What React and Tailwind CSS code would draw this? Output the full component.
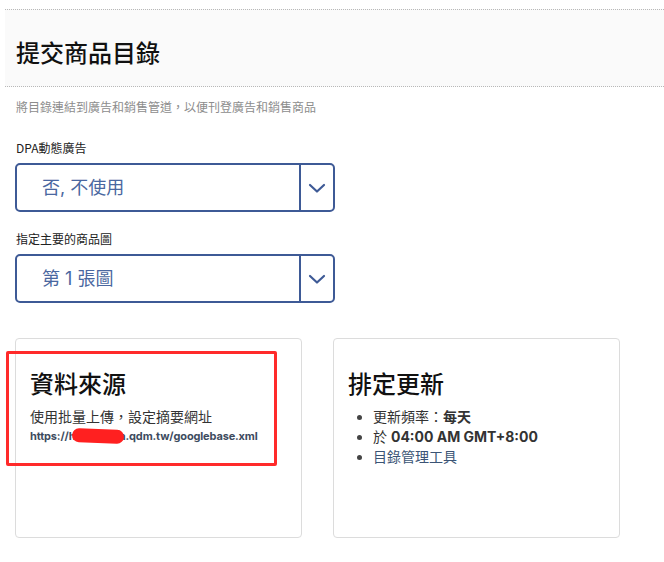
import React from "react";

function Chevron() {
  return (
    <svg width="18" height="12" viewBox="0 0 18 12" fill="none">
      <path d="M2 3 L9 9.5 L16 3" stroke="#3e5a96" strokeWidth="2.2" strokeLinecap="round" strokeLinejoin="round" />
    </svg>
  );
}

function Select({ value }) {
  return (
    <div className="w-[320px] h-[49px] border-2 border-[#3e5a96] rounded-[5px] flex">
      <div className="flex-1 flex items-center pl-[25px] text-[18px] text-[#4a67a0]">{value}</div>
      <div className="w-[34px] border-l-2 border-[#3e5a96] flex items-center justify-center">
        <Chevron />
      </div>
    </div>
  );
}

export default function App() {
  return (
    <div className="w-[664px] h-[562px] bg-white relative overflow-hidden font-['Inter','Noto_Sans_CJK_TC',sans-serif] text-[#1c1e21]">
      <div className="pt-[9px] pl-[5px]">
        <div className="border-y border-dotted border-[#b8b8b8] bg-[#fafafa] h-[78px] pl-[11px] pt-[26px]">
          <h1 className="text-[24px] leading-[32px] font-medium font-['Noto_Sans_CJK_TC',sans-serif] text-[#111]">提交商品目錄</h1>
        </div>
      </div>
      <div className="pl-[16px]">
        <p className="mt-[12px] text-[12px] leading-[16px] text-[#8d8d8d] font-['Noto_Sans_CJK_TC',sans-serif]">將目錄連結到廣告和銷售管道，以便刊登廣告和銷售商品</p>
        <p className="mt-[25px] text-[12px] leading-[16px] text-[#222] font-['Noto_Sans_CJK_TC',sans-serif]">DPA動態廣告</p>
      </div>
      <div className="pl-[15px] mt-[7px]">
        <Select value="否, 不使用" />
      </div>
      <div className="pl-[16px]">
        <p className="mt-[19px] text-[12px] leading-[16px] text-[#222] font-['Noto_Sans_CJK_TC',sans-serif]">指定主要的商品圖</p>
      </div>
      <div className="pl-[15px] mt-[7px]">
        <Select value="第 1 張圖" />
      </div>

      <div className="pl-[15px] mt-[35px] flex gap-[31px]">
        <div className="w-[287px] h-[200px] border border-[#dcdcdc] rounded-[4px] pl-[14px] pt-[30px]">
          <h2 className="text-[24px] leading-[32px] font-medium text-[#111]">資料來源</h2>
          <p className="mt-[6px] text-[14px] leading-[20px] text-[#333]">使用批量上傳，設定摘要網址</p>
          <p className="relative mt-[1px] text-[11px] leading-[16px] font-bold tracking-[-0.15px] text-[#3d4b5e] whitespace-nowrap">
            https://h<span className="inline-block w-[44px]"></span>a.qdm.tw/googlebase.xml
            <span className="absolute left-[42px] top-[1px] w-[52px] h-[14px] bg-[#ff2020] rounded-[7px] rotate-[2deg]"></span>
          </p>
        </div>
        <div className="w-[287px] h-[200px] border border-[#dcdcdc] rounded-[4px] pl-[14px] pt-[30px]">
          <h2 className="text-[24px] leading-[32px] font-medium text-[#111]">排定更新</h2>
          <ul className="mt-[6px] list-disc pl-[25px] text-[14px] leading-[20px] text-[#333] marker:text-[#444]">
            <li>更新頻率：<span className="font-bold">每天</span></li>
            <li>於 <span className="font-bold">04:00 AM GMT+8:00</span></li>
            <li className="text-[#3b5475]">目錄管理工具</li>
          </ul>
        </div>
      </div>

      <div className="absolute left-[6px] top-[351px] w-[271px] h-[115px] border-[3px] border-[#ff2a2a] rounded-[2px]"></div>
    </div>
  );
}
